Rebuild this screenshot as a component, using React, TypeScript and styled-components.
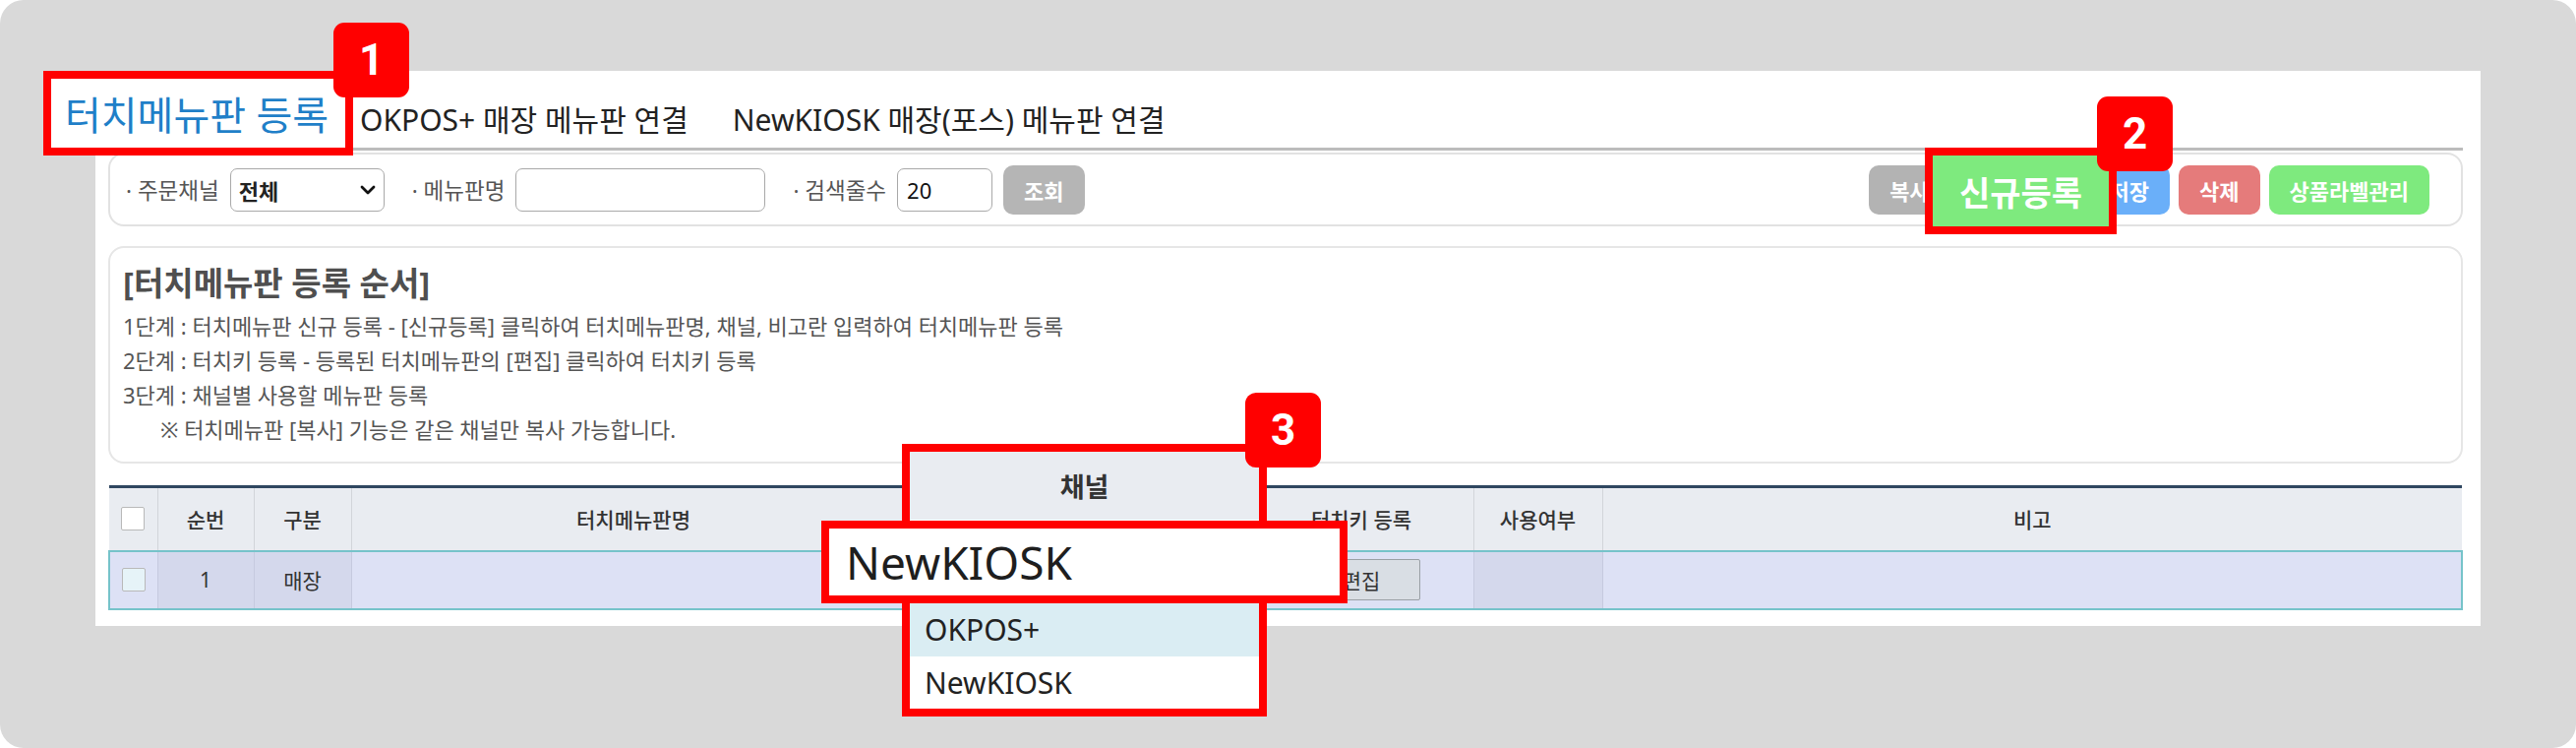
import styled, { createGlobalStyle } from 'styled-components';

const GlobalStyle = createGlobalStyle`
  html, body {
    margin: 0;
    padding: 0;
    background: #ffffff;
  }
  body {
    font-family: "Noto Sans", "Noto Sans CJK KR", sans-serif;
  }
  * {
    box-sizing: border-box;
  }
`;

const Frame = styled.div`
  position: relative;
  width: 2619px;
  height: 760px;
  background: #d9d9d9;
  border-radius: 24px;
  padding: 72px 97px 124px 97px;
`;

const Panel = styled.div`
  height: 564px;
  background: #ffffff;
  padding: 0 18px 0 13px;
  display: flex;
  flex-direction: column;
`;

// 탭
const TabBar = styled.div`
  height: 81px;
  display: flex;
  align-items: flex-end;
  gap: 45px;
  padding-left: 10px;
  border-bottom: 3px solid #bcbcbc;
`;

const Tab = styled.div<{ $active?: boolean }>`
  padding-bottom: 8px;
  font-size: 30px;
  line-height: 40px;
  color: ${(p) => (p.$active ? '#1f7fc8' : '#222222')};
  white-space: nowrap;
`;

// 검색영역
const SearchBox = styled.div`
  margin-top: 2px;
  height: 75px;
  border: 2px solid #e2e2e2;
  border-radius: 16px;
  padding: 0 32px 0 16px;
  display: flex;
  align-items: center;
  gap: 28px;
`;

const Field = styled.div`
  display: flex;
  align-items: center;
  gap: 11px;
`;

const Label = styled.span`
  font-size: 22.5px;
  color: #555555;
  white-space: nowrap;
`;

const SelectBox = styled.div`
  width: 157px;
  height: 44px;
  border: 1px solid #a9a9a9;
  border-radius: 7px;
  padding: 0 8px 0 8px;
  display: flex;
  align-items: center;
  justify-content: space-between;
  font-size: 22px;
  font-weight: 700;
  color: #222222;
`;

const TextInput = styled.div<{ $w: number }>`
  width: ${(p) => p.$w}px;
  height: 44px;
  border: 1px solid #a9a9a9;
  border-radius: 7px;
  padding: 0 9px;
  display: flex;
  align-items: center;
  font-size: 22px;
  color: #111111;
`;

const ButtonGroup = styled.div`
  margin-left: auto;
  display: flex;
  gap: 9px;
`;

const ActionBtn = styled.div<{ $bg: string }>`
  height: 50px;
  padding: 0 21px;
  border-radius: 10px;
  background: ${(p) => p.$bg};
  color: #ffffff;
  font-size: 22px;
  font-weight: 700;
  display: flex;
  align-items: center;
  justify-content: center;
  white-space: nowrap;
`;

// 안내
const InfoBox = styled.div`
  margin-top: 20px;
  height: 221px;
  border: 2px solid #e6e6e6;
  border-radius: 16px;
  padding: 16px 14px 0 13px;
`;

const InfoTitle = styled.div`
  font-size: 33px;
  line-height: 40px;
  font-weight: 700;
  color: #4f4f4f;
  margin-bottom: 6px;
`;

const InfoLine = styled.div<{ $indent?: boolean }>`
  font-size: 22px;
  line-height: 35px;
  color: #555555;
  padding-left: ${(p) => (p.$indent ? '38px' : '0')};
  white-space: nowrap;
`;

// 테이블
const Table = styled.table`
  margin-top: 22px;
  width: 100%;
  border-collapse: collapse;
  table-layout: fixed;
`;

const Th = styled.th`
  height: 65px;
  background: #e9ecf1;
  border-top: 3px solid #2f4760;
  border-right: 1px solid #d2d5da;
  font-size: 21px;
  font-weight: 500;
  color: #333333;
  text-align: center;
  &:last-child {
    border-right: none;
  }
`;

const Td = styled.td<{ $dark?: boolean }>`
  height: 59px;
  background: ${(p) => (p.$dark ? '#d4d8ec' : '#dde1f5')};
  border-top: 2px solid #76c3ca;
  border-bottom: 2px solid #76c3ca;
  border-right: 1px solid #c6cadf;
  font-size: 21px;
  color: #333333;
  text-align: center;
  &:first-child {
    border-left: 2px solid #76c3ca;
  }
  &:last-child {
    border-right: 2px solid #76c3ca;
  }
`;

const Check = styled.div<{ $tint?: boolean }>`
  width: 24px;
  height: 24px;
  margin: 0 auto;
  background: ${(p) => (p.$tint ? '#e6f3f8' : '#ffffff')};
  border: 1px solid #b9b9b9;
  border-radius: 2px;
`;

const EditBtn = styled.div`
  width: 120px;
  height: 42px;
  margin: 0 auto;
  background: #d9dee4;
  border: 1px solid #9aa0a6;
  border-radius: 2px;
  display: flex;
  align-items: center;
  justify-content: center;
  font-size: 21px;
  color: #333333;
`;

// 주석(빨간 표시)
const Callout = styled.div<{ $x: number; $y: number; $w: number; $h: number; $bg?: string }>`
  position: absolute;
  left: ${(p) => p.$x}px;
  top: ${(p) => p.$y}px;
  width: ${(p) => p.$w}px;
  height: ${(p) => p.$h}px;
  border: 8px solid #ff0000;
  background: ${(p) => p.$bg || '#ffffff'};
  display: flex;
  align-items: center;
`;

const CalloutTabText = styled.span`
  padding-left: 14px;
  font-size: 40px;
  color: #1f7fc8;
  white-space: nowrap;
`;

const CalloutBtnText = styled.span`
  width: 100%;
  text-align: center;
  font-size: 34px;
  font-weight: 700;
  color: #ffffff;
  white-space: nowrap;
`;

const Badge = styled.div<{ $x: number; $y: number }>`
  position: absolute;
  left: ${(p) => p.$x}px;
  top: ${(p) => p.$y}px;
  width: 77px;
  height: 76px;
  border-radius: 11px;
  background: #ff0000;
  color: #ffffff;
  font-family: Roboto, "Liberation Sans", sans-serif;
  font-size: 44px;
  font-weight: 700;
  display: flex;
  align-items: center;
  justify-content: center;
  z-index: 5;
`;

const Dropdown = styled.div`
  position: absolute;
  left: 917px;
  top: 451px;
  width: 371px;
  height: 277px;
  border: 8px solid #ff0000;
  background: #ffffff;
  display: flex;
  flex-direction: column;
`;

const DropHead = styled.div`
  height: 69px;
  background: #e9ecf1;
  display: flex;
  align-items: center;
  justify-content: center;
  font-size: 27px;
  font-weight: 700;
  color: #333333;
`;

const DropValue = styled.div`
  height: 84px;
`;

const DropOption = styled.div<{ $hover?: boolean; $h: number }>`
  height: ${(p) => p.$h}px;
  background: ${(p) => (p.$hover ? '#daedf3' : '#ffffff')};
  padding-left: 15px;
  display: flex;
  align-items: center;
  font-size: 30px;
  color: #222222;
`;

const Magnified = styled.div`
  position: absolute;
  left: 835px;
  top: 529px;
  width: 535px;
  height: 84px;
  border: 8px solid #ff0000;
  background: #ffffff;
  padding-left: 17px;
  display: flex;
  align-items: center;
  font-size: 46px;
  color: #1e1e1e;
  z-index: 3;
`;

const Chevron = () => (
  <svg width="16" height="10" viewBox="0 0 16 10">
    <path d="M2 2 L8 8 L14 2" fill="none" stroke="#111" strokeWidth="2.8" strokeLinecap="round" strokeLinejoin="round" />
  </svg>
);

const columns = [49, 98, 99, 574, 339, 228, 131];

export default function App() {
  return (
    <>
      <GlobalStyle />
      <Frame>
        <Panel>
          <TabBar>
            <Tab $active>터치메뉴판 등록</Tab>
            <Tab>OKPOS+ 매장 메뉴판 연결</Tab>
            <Tab>NewKIOSK 매장(포스) 메뉴판 연결</Tab>
          </TabBar>

          <SearchBox>
            <Field>
              <Label>· 주문채널</Label>
              <SelectBox>
                전체
                <Chevron />
              </SelectBox>
            </Field>
            <Field>
              <Label>· 메뉴판명</Label>
              <TextInput $w={254} />
            </Field>
            <Field>
              <Label>· 검색줄수</Label>
              <TextInput $w={97}>20</TextInput>
              <ActionBtn $bg="#b5b5b5">조회</ActionBtn>
            </Field>
            <ButtonGroup>
              <ActionBtn $bg="#b3b3b3">복사</ActionBtn>
              <ActionBtn $bg="#7eea7e">신규등록</ActionBtn>
              <ActionBtn $bg="#6aaff9">저장</ActionBtn>
              <ActionBtn $bg="#e57b7b">삭제</ActionBtn>
              <ActionBtn $bg="#7eea7e">상품라벨관리</ActionBtn>
            </ButtonGroup>
          </SearchBox>

          <InfoBox>
            <InfoTitle>[터치메뉴판 등록 순서]</InfoTitle>
            <InfoLine>1단계 : 터치메뉴판 신규 등록 - [신규등록] 클릭하여 터치메뉴판명, 채널, 비고란 입력하여 터치메뉴판 등록</InfoLine>
            <InfoLine>2단계 : 터치키 등록 - 등록된 터치메뉴판의 [편집] 클릭하여 터치키 등록</InfoLine>
            <InfoLine>3단계 : 채널별 사용할 메뉴판 등록</InfoLine>
            <InfoLine $indent>※ 터치메뉴판 [복사] 기능은 같은 채널만 복사 가능합니다.</InfoLine>
          </InfoBox>

          <Table>
            <colgroup>
              {columns.map((w, i) => (
                <col key={i} style={{ width: w }} />
              ))}
              <col />
            </colgroup>
            <thead>
              <tr>
                <Th>
                  <Check />
                </Th>
                <Th>순번</Th>
                <Th>구분</Th>
                <Th>터치메뉴판명</Th>
                <Th>채널</Th>
                <Th>터치키 등록</Th>
                <Th>사용여부</Th>
                <Th>비고</Th>
              </tr>
            </thead>
            <tbody>
              <tr>
                <Td>
                  <Check $tint />
                </Td>
                <Td $dark>1</Td>
                <Td $dark>매장</Td>
                <Td></Td>
                <Td>NewKIOSK</Td>
                <Td>
                  <EditBtn>편집</EditBtn>
                </Td>
                <Td $dark></Td>
                <Td></Td>
              </tr>
            </tbody>
          </Table>
        </Panel>

        {/* 1 */}
        <Callout $x={44} $y={72} $w={315} $h={86}>
          <CalloutTabText>터치메뉴판 등록</CalloutTabText>
        </Callout>
        <Badge $x={339} $y={23}>1</Badge>

        {/* 2 */}
        <Callout $x={1957} $y={150} $w={195} $h={88} $bg="#7eea7e">
          <CalloutBtnText>신규등록</CalloutBtnText>
        </Callout>
        <Badge $x={2132} $y={98}>2</Badge>

        {/* 3 */}
        <Dropdown>
          <DropHead>채널</DropHead>
          <DropValue />
          <DropOption $hover $h={55}>OKPOS+</DropOption>
          <DropOption $h={52}>NewKIOSK</DropOption>
        </Dropdown>
        <Magnified>NewKIOSK</Magnified>
        <Badge $x={1266} $y={399}>3</Badge>
      </Frame>
    </>
  );
}
